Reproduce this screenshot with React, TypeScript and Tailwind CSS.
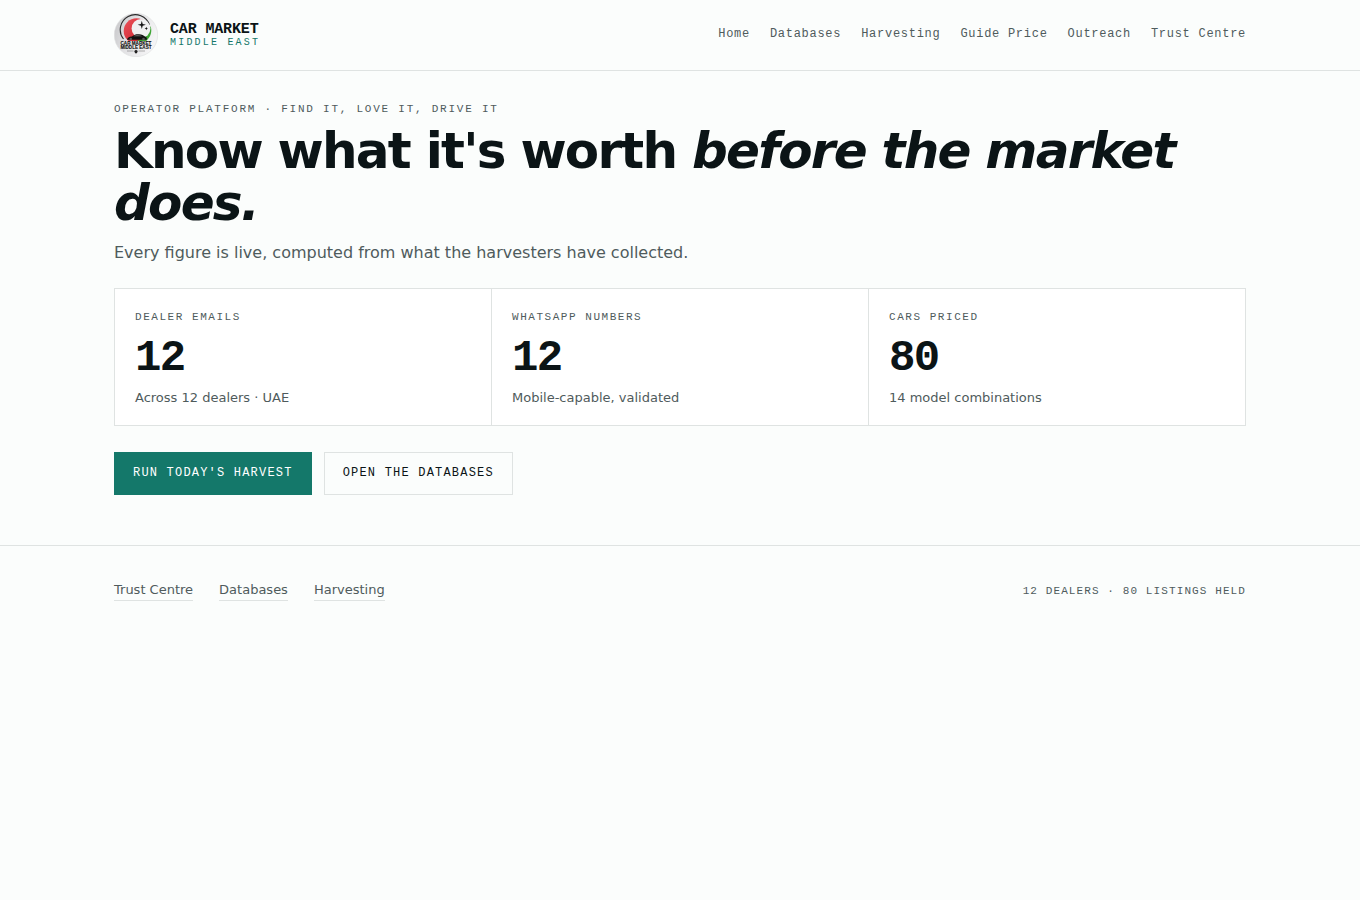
const navLinks = ["Home", "Databases", "Harvesting", "Guide Price", "Outreach", "Trust Centre"];
const footerLinks = ["Trust Centre", "Databases", "Harvesting"];
const stats = [
  { label: "Dealer emails", value: "12", note: "Across 12 dealers · UAE" },
  { label: "WhatsApp numbers", value: "12", note: "Mobile-capable, validated" },
  { label: "Cars priced", value: "80", note: "14 model combinations" },
];

function Logo() {
  return (
    <svg className="size-11 shrink-0" viewBox="0 0 44 44" aria-hidden="true">
      <defs>
        <linearGradient id="disc" x1="0" y1="0" x2="1" y2="0.4">
          <stop offset="0" stopColor="#c4c4c6" />
          <stop offset="0.5" stopColor="#e2e2e4" />
          <stop offset="1" stopColor="#f4f4f5" />
        </linearGradient>
        <linearGradient id="red" x1="0" y1="0" x2="1" y2="1">
          <stop offset="0" stopColor="#ea5058" />
          <stop offset="1" stopColor="#c81e2a" />
        </linearGradient>
      </defs>
      <circle cx="22" cy="22" r="21.7" fill="url(#disc)" stroke="#dcdedd" strokeWidth="0.6" />
      <path d="M9.500 26A15 15 0 1 1 35.500 12" fill="none" stroke="#2a2a2a" strokeWidth="1.100" />
      <circle cx="22.500" cy="18" r="12.800" fill="url(#red)" />
      <path d="M36.500 13c2 5.500.3 11-4.500 15.200H22c7-2 12-7 14.500-15.200Z" fill="#3fa535" />
      <circle cx="27" cy="15.500" r="9.400" fill="#f0f0f1" />
      <path d="M27.800 7.700l.9 3.200 3.200.9-3.200.9-.9 3.200-.9-3.200-3.200-.9 3.200-.9ZM32.300 13.800l.5 1.200 1.200.5-1.200.5-.5 1.200-.5-1.200-1.200-.5 1.200-.5Z" fill="#161616" />
      <path d="M13 26.800c.3-2 2-3 5-3.300 2-1.800 4-2.300 7-2.200 3 .1 4.500 1 6 2.300 1.500.4 2 1.200 2 3.200Z" fill="#111" />
      <path d="M19.500 23.200c2-1.200 6-1.400 9 .1Z" fill="#777" />
      <circle cx="16.800" cy="26" r="1.300" fill="#555" />
      <circle cx="29.500" cy="26" r="1.300" fill="#555" />
      <path d="M8 28h28v4H8Z" fill="#e4e4e5" />
      <g fill="#111" stroke="#111" strokeWidth="0.1" fontFamily="Liberation Sans, sans-serif" fontWeight="700" fontSize="4.600" textAnchor="middle">
        <text x="22" y="32">CAR MARKET</text>
        <text x="22" y="36">MIDDLE EAST</text>
      </g>
      <path d="M13 38h6.500M24.500 38H31" stroke="#666" strokeWidth="0.500" />
      <path d="M22 36.800l1.800 1.200-.6 1.500-1.200 1.200-1.200-1.200-.6-1.500Z" fill="#222" />
    </svg>
  );
}

export default function App() {
  return (
    <div className="min-h-screen bg-[#fbfdfc] font-['DejaVu_Sans',sans-serif] text-[#0b1416]">
      <header className="border-b border-[#dfe3e2]">
        <div className="mx-auto flex max-w-[1180px] flex-wrap items-center justify-between gap-4 px-6 py-[13px]">
          <a href="#home" className="flex items-center gap-3 font-['Liberation_Mono',monospace]">
            <Logo />
            <span className="flex flex-col">
              <span className="text-[15px] leading-4 font-bold tracking-[-0.01em]">CAR MARKET</span>
              <span className="text-[10px] leading-[10px] tracking-[0.22em] text-[#14786a] uppercase">Middle East</span>
            </span>
          </a>
          <nav className="flex flex-wrap gap-5 pb-0.5 font-['Liberation_Mono',monospace] text-xs leading-4 tracking-[0.06em] text-[#4f5b5c]">
            {navLinks.map((label) => (
              <a key={label} href="#">{label}</a>
            ))}
          </nav>
        </div>
      </header>

      <main className="mx-auto max-w-[1180px] px-6 pt-[30px] pb-[50px]">
        <p className="font-['Liberation_Mono',monospace] text-[11px] leading-4 tracking-[0.16em] text-[#4f5b5c] uppercase">
          Operator platform · Find it, love it, drive it
        </p>
        <h1 className="mt-2 text-[50px] leading-[52px] font-bold tracking-[-0.035em]">
          Know what it's worth <em>before the market does.</em>
        </h1>
        <p className="mt-3 text-base leading-6 text-[#4f5b5c]">
          Every figure is live, computed from what the harvesters have collected.
        </p>

        <section className="mt-[23px] grid grid-cols-1 gap-px border border-[#dfe3e2] bg-[#dfe3e2] sm:grid-cols-3">
          {stats.map((stat) => (
            <div key={stat.label} className="bg-white px-5 pt-5 pb-[17px]">
              <p className="font-['Liberation_Mono',monospace] text-[11px] leading-4 tracking-[0.14em] text-[#4f5b5c] uppercase">
                {stat.label}
              </p>
              <p className="mt-[11px] font-['Liberation_Mono',monospace] text-[44px] leading-[44px] font-bold tracking-[-0.04em]">
                {stat.value}
              </p>
              <p className="mt-2 text-[13px] leading-5 text-[#4f5b5c]">{stat.note}</p>
            </div>
          ))}
        </section>

        <div className="mt-[26px] flex flex-wrap gap-3 font-['Liberation_Mono',monospace] text-xs leading-4 tracking-[0.1em]">
          <button type="button" className="border border-[#14786a] bg-[#14786a] px-[18px] pt-3 pb-[13px] text-white uppercase">
            Run today's harvest
          </button>
          <button type="button" className="border border-[#dfe3e2] px-[18px] pt-3 pb-[13px] uppercase">
            Open the databases
          </button>
        </div>
      </main>

      <footer className="border-t border-[#dfe3e2]">
        <div className="mx-auto flex max-w-[1180px] flex-wrap items-center justify-between gap-4 px-6 py-[34px] text-[#4f5b5c]">
          <nav className="flex flex-wrap gap-[26px] text-[13px] leading-5">
            {footerLinks.map((label) => (
              <a key={label} href="#" className="border-b border-[#dfe3e2]">{label}</a>
            ))}
          </nav>
          <p className="font-['Liberation_Mono',monospace] text-[11px] leading-4 tracking-[0.1em] uppercase">
            12 dealers · 80 listings held
          </p>
        </div>
      </footer>
    </div>
  );
}
